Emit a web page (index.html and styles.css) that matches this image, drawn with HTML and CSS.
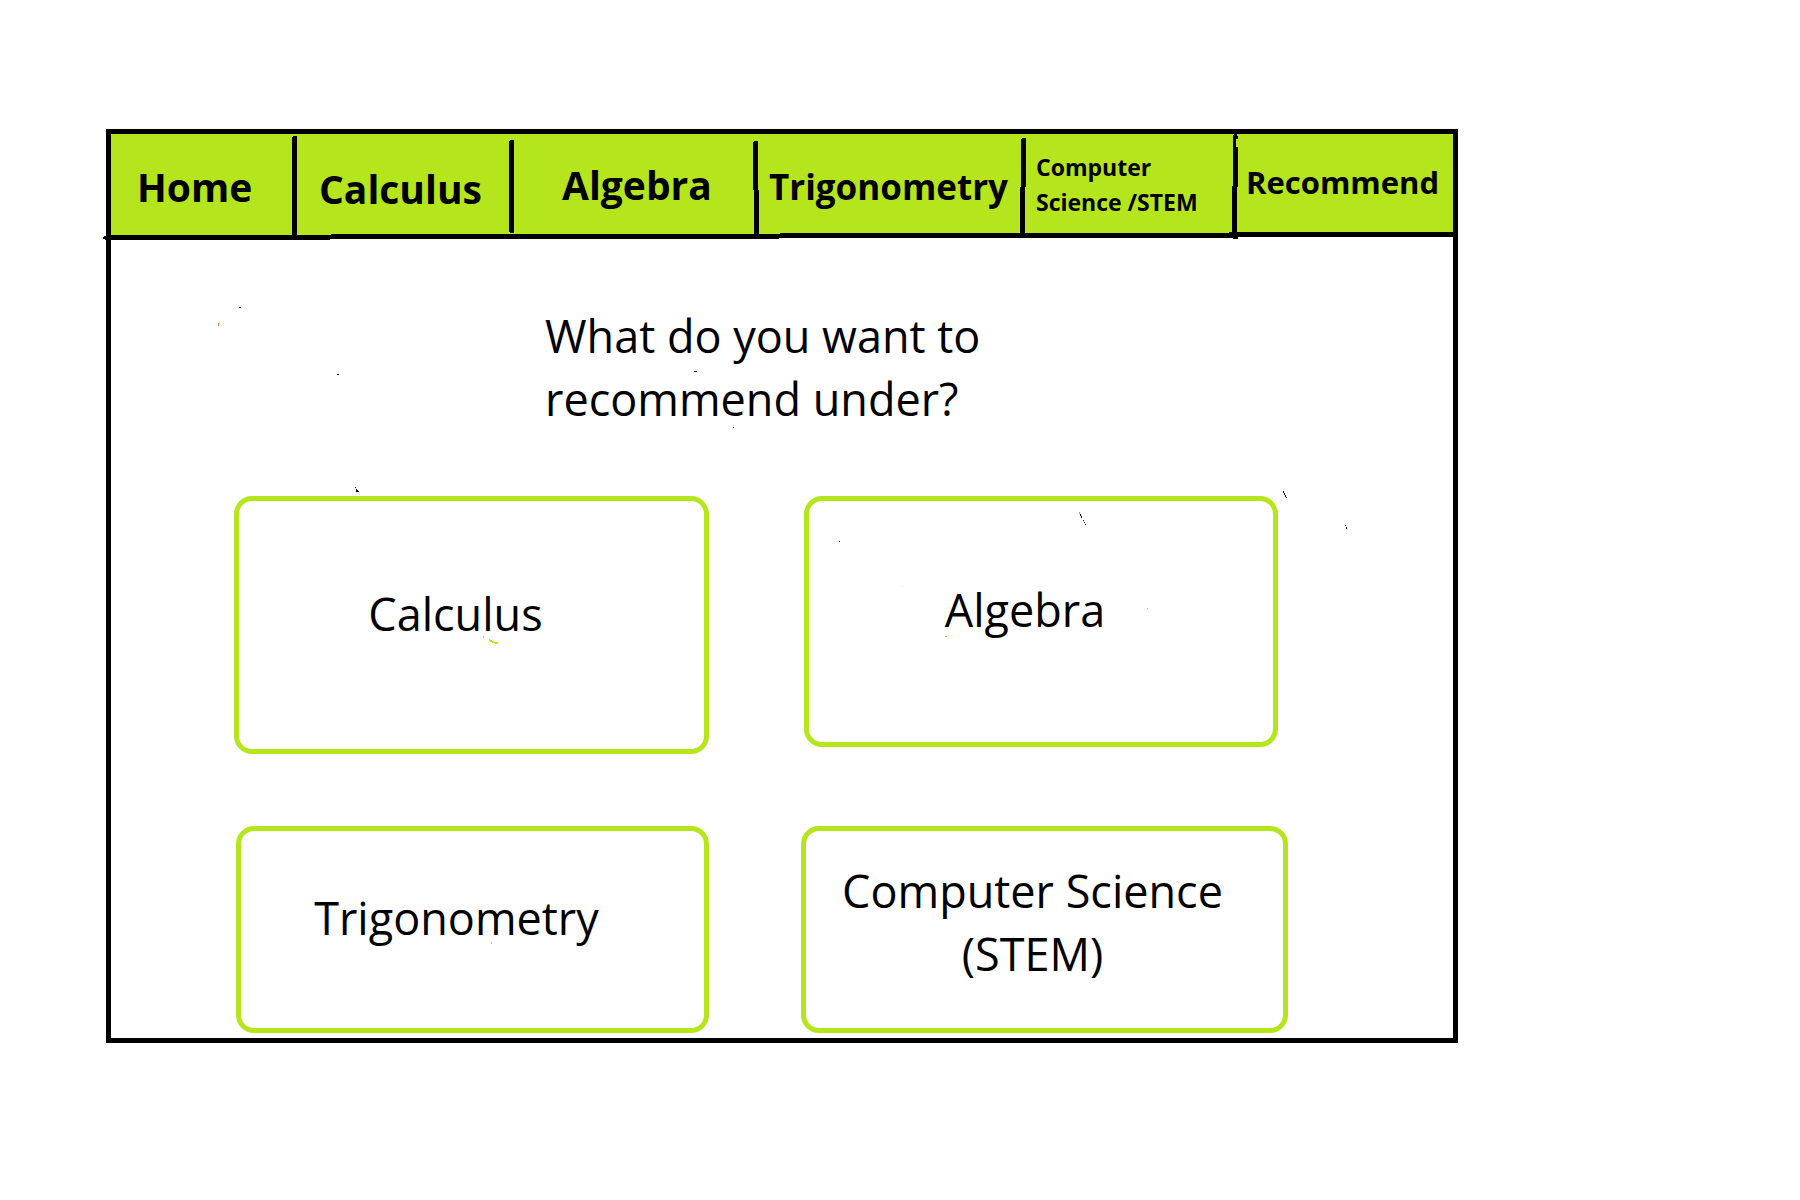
FILE: index.html
```html
<!DOCTYPE html>
<html lang="en">
<head>
  <meta charset="utf-8">
  <meta name="viewport" content="width=device-width, initial-scale=1">
  <title>Recommend</title>
  <link rel="stylesheet" href="styles.css">
</head>
<body class="page">
  <div class="frame">
    <nav class="nav" aria-label="Subjects">
      <a class="nav-link nav-link-home" href="#home">Home</a>
      <a class="nav-link nav-link-calculus" href="#calculus">Calculus</a>
      <a class="nav-link nav-link-algebra" href="#algebra">Algebra</a>
      <a class="nav-link nav-link-trig" href="#trigonometry">Trigonometry</a>
      <a class="nav-link nav-link-stem" href="#stem">Computer<br>Science /STEM</a>
      <a class="nav-link nav-link-recommend" href="#recommend" aria-current="page">Recommend</a>
    </nav>

    <main class="main">
      <div class="intro">
        <h1 class="question">What do you want to<br>recommend under?</h1>
      </div>
      <div class="row row-tall">
        <button class="card card-left" type="button">Calculus</button>
        <button class="card card-right" type="button">Algebra</button>
      </div>
      <div class="row row-short">
        <button class="card card-left" type="button">Trigonometry</button>
        <button class="card card-right" type="button">Computer Science<br>(STEM)</button>
      </div>
    </main>

    <!-- Hand-drawn menu rules and stray pen marks -->
    <svg class="ink" viewBox="106 129 1352 914" preserveAspectRatio="none" aria-hidden="true" shape-rendering="crispEdges">
      <g fill="#000">
        <path d="M104 236h2v-1h225v-1h449v-1h449v-1h229v5h-220v2h-5v-1h-454v1h-449v1h-225v-1h-2z"/>
        <path d="M293 136h3l1 1v99h-5v-99z"/>
        <path d="M510 140h3l1 1v91l-1 1h-3l-1-1v-91z"/>
        <path d="M754 141h3l1 1v48h1v45h-5v-45h-1v-48z"/>
        <path d="M1022 138h3l1 1v48h-1v48h-5v-48h1v-48z"/>
        <path d="M1234 134h3v2h1v3h-2v8h2v40h-1v51h-5v-52h1v-50z"/>
        <path d="M239 307h2v1h-2zM337 374h2v1h-2zM694 371h3v1h-3zM733 427h1v1h-1z"/>
        <path d="M355 487h1v1h-1zM356 489h1v1h1v1h1v1h-3z"/>
        <path d="M1080 514h1v2h1v2h-1v-2h-1zM1083 520h1v1h-1zM1084 522h1v1h-1zM1085 524h1v1h-1z"/>
        <path d="M1283 491h1v2h1v2h1v2h1v1h-1v-1h-1v-2h-1v-2h-1z"/>
        <path d="M1345 525h1v1h-1zM1346 527h1v2h-1zM839 541h1v1h-1z"/>
      </g>
      <path fill="#e8963c" d="M218 323h1v3h-1zM1079 512h1v2h-1z"/>
      <path fill="#b5e61d" d="M489 639h1v1h2v1h2v1h4v2h-3v-1h-3v-1h-2v-1h-1zM945 636h2v1h-2zM491 942h1v2h-1z"/>
      <path fill="#9fe0a0" d="M483 636h1v2h-1zM1147 608h1v1h-1z"/>
      <path fill="#f8f8b8" d="M901 586h2v1h-2z"/>
    </svg>
  </div>
</body>
</html>
```
FILE: styles.css
```css
* {
  box-sizing: border-box;
}

.page {
  margin: 0;
  padding: 129px 19% 129px 106px;
  background: #fff;
  color: #000;
  font-family: "Open Sans", "Noto Sans", sans-serif;
}

.frame {
  position: relative;
  border: 5px solid #000;
}

.nav {
  display: grid;
  grid-template-columns: 186fr 217fr 245fr 267fr 212fr 215fr;
  min-height: 101px;
  background: #b5e61d;
}

.nav-link {
  display: flex;
  align-items: center;
  padding-left: 10px;
  color: #000;
  font-size: 39px;
  font-weight: 700;
  line-height: 35px;
  text-decoration: none;
  white-space: nowrap;
}

.nav-link-home {
  padding-top: 4px;
  padding-left: 26px;
}

.nav-link-calculus {
  padding-top: 8px;
  padding-left: 22px;
}

.nav-link-algebra {
  padding-left: 48px;
}

.nav-link-trig {
  padding-top: 4px;
  font-size: 35px;
}

.nav-link-stem {
  font-size: 23px;
}

.nav-link-recommend {
  padding-bottom: 4px;
  padding-left: 8px;
  font-size: 31px;
}

.main {
  padding: 69px 0 5px;
}

.intro {
  display: grid;
  grid-template-columns: 434fr 908fr;
}

.question {
  grid-column: 2;
  margin: 0;
  font-size: 45px;
  font-weight: 400;
  line-height: 63px;
}

.row {
  display: grid;
}

.row-tall {
  grid-template-columns: 123fr 475fr 95fr 474fr 175fr;
  margin-top: 66px;
}

.row-short {
  grid-template-columns: 125fr 473fr 92fr 487fr 165fr;
  margin-top: 72px;
}

.card {
  min-height: 207px;
  padding: 0 32px 24px 0;
  border: 5px solid #b5e61d;
  border-radius: 18px;
  background: transparent;
  color: inherit;
  font-family: inherit;
  font-size: 45px;
  line-height: 63px;
  cursor: pointer;
}

.row-tall .card-left {
  min-height: 258px;
}

.row-tall .card-right {
  align-self: start;
  min-height: 251px;
}

.row-short .card-right {
  padding: 0 24px 16px 0;
}

.card-left {
  grid-column: 2;
}

.card-right {
  grid-column: 4;
}

.ink {
  position: absolute;
  top: -5px;
  left: -5px;
  width: calc(100% + 10px);
  height: calc(100% + 10px);
  overflow: visible;
  pointer-events: none;
}
```
